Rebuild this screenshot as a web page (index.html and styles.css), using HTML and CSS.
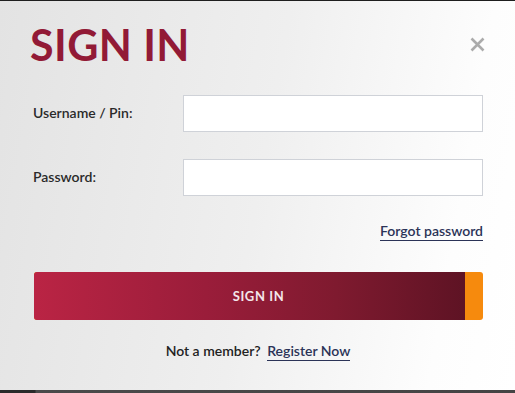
FILE: index.html
```html
<!DOCTYPE html>
<html>
<head>
<meta charset="utf-8">
<link rel="stylesheet" href="styles.css">
</head>
<body>
<div class="modal">
  <div class="header">
    <h1 class="title">SIGN IN</h1>
    <button class="close" aria-label="Close">
      <svg width="15" height="15" viewBox="0 0 15 15"><path d="M1.5 1.5 L13.5 13.5 M13.5 1.5 L1.5 13.5" stroke="#ababab" stroke-width="2.6" stroke-linecap="butt"/></svg>
    </button>
  </div>
  <form class="form">
    <label class="label" for="u">Username / Pin:</label>
    <input class="input" id="u" type="text">
    <label class="label" for="p">Password:</label>
    <input class="input" id="p" type="password">
  </form>
  <div class="forgot-row"><a class="link" href="#">Forgot password</a></div>
  <button class="submit"><span class="submit-text">SIGN IN</span><span class="submit-tab"></span></button>
  <p class="register">Not a member? <a class="link register-link" href="#">Register Now</a></p>
</div>
<div class="backdrop-strip"></div>
</body>
</html>
```
FILE: styles.css
```css
html, body {
  margin: 0;
  padding: 0;
}
body {
  background: #3c3c3c;
  font-family: Lato, "Open Sans", sans-serif;
  border-top: 1px solid #1e1e1e;
  overflow: hidden;
}
.modal {
  height: 389px;
  box-sizing: border-box;
  background: linear-gradient(100deg, #e3e3e3 0%, #efefef 50%, #fdfdfd 85%, #ffffff 100%);
  padding: 22px 32px 0 33px;
}
.header {
  display: flex;
  justify-content: space-between;
  align-items: flex-start;
}
.title {
  margin: 0 0 0 -3px;
  font-size: 43px;
  line-height: 1;
  font-weight: 700;
  color: #921a36;
  letter-spacing: 0.4px;
}
.close {
  border: 0;
  background: none;
  padding: 0;
  margin: 14px -2px 0 0;
  width: 15px;
  height: 15px;
  display: block;
}
.close svg { display: block; }
.form {
  display: grid;
  grid-template-columns: 150px 300px;
  grid-template-rows: 37px 37px;
  row-gap: 27px;
  align-items: center;
  margin-top: 29px;
}
.label {
  font-size: 14px;
  font-weight: 600;
  color: #2a2a2a;
  padding-bottom: 2px;
}
.input {
  height: 37px;
  box-sizing: border-box;
  border: 1px solid #cfd2d8;
  background: #fff;
  margin: 0;
  font-size: 14px;
}
.forgot-row {
  display: flex;
  justify-content: flex-end;
  margin-top: 26px;
  width: 450px;
}
.link {
  color: #2b3357;
  text-decoration: none;
  font-size: 14px;
  font-weight: 600;
  border-bottom: 1px solid #2b3357;
  padding-bottom: 1px;
}
.register-link {
  margin-left: 3px;
}
.submit {
  display: flex;
  width: 449px;
  height: 48px;
  margin: 31px 0 0 1px;
  padding: 0;
  border: 0;
  border-radius: 3px;
  overflow: hidden;
  background: #f68a0d;
  cursor: pointer;
}
.submit-text {
  flex: 1;
  display: flex;
  align-items: center;
  justify-content: center;
  padding-left: 18px;
  background: linear-gradient(90deg, #ba2444 0%, #9a1d3a 40%, #7f1a2f 70%, #5e1324 100%);
  color: #f4e6ea;
  font-family: Lato, sans-serif;
  font-size: 13px;
  font-weight: 700;
  letter-spacing: 0.6px;
}
.submit-tab {
  width: 18px;
  flex: none;
}
.register {
  margin: 22px 0 0;
  text-align: center;
  width: 450px;
  font-size: 14px;
  font-weight: 600;
  color: #222;
}
.backdrop-strip {
  height: 10px;
  background: linear-gradient(90deg, #2a2a2a 0, #2a2a2a 35px, #4a4a4a 36px, #444 100%);
}
```
